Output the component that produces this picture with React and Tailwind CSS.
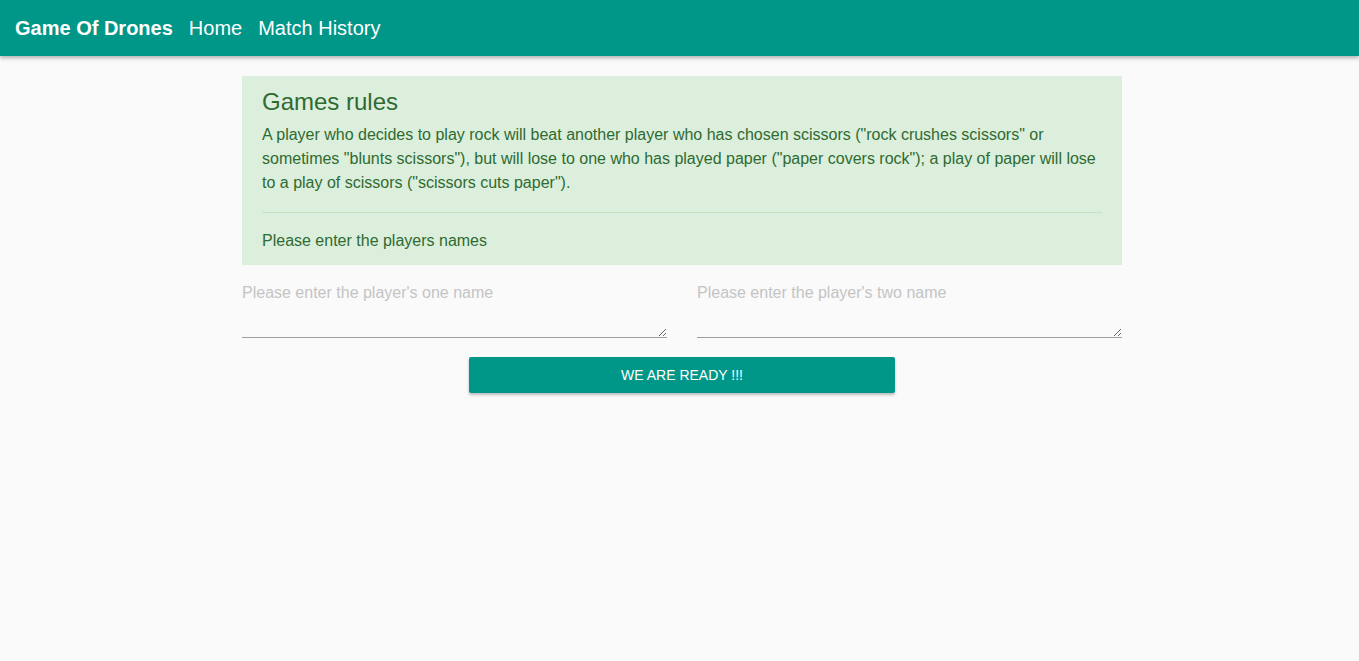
import React, { useState } from "react";

const App = () => {
  const [players, setPlayers] = useState({ one: "", two: "" });

  const handleChange = (e) => {
    const { name, value } = e.target;
    setPlayers({ ...players, [name]: value });
  };

  return (
    <div className="min-h-screen bg-[#fafafa] font-['Liberation_Sans',Arial,sans-serif]">
      {/* Navbar */}
      <nav className="h-[56px] bg-[#009688] flex items-center pl-[15px] shadow-[0_2px_4px_rgba(0,0,0,0.3)]">
        <span className="text-white text-[20px] font-bold mr-[16px]">Game Of Drones</span>
        <a className="text-white text-[20px] mr-[16px]" href="#">Home</a>
        <a className="text-white text-[20px]" href="#">Match History</a>
      </nav>

      <div className="w-[880px] ml-[242px] pt-[20px]">
        {/* Rules */}
        <div className="bg-[#dcefdc] text-[#2f6a31] px-[20px] pt-[14px] pb-[12px]">
          <h2 className="text-[24px] leading-[24px]">Games rules</h2>
          <p className="mt-[9px] text-[16px] leading-[24px]">
            A player who decides to play rock will beat another player who has chosen scissors ("rock crushes scissors" or
            sometimes "blunts scissors"), but will lose to one who has played paper ("paper covers rock"); a play of paper will lose
            to a play of scissors ("scissors cuts paper").
          </p>
          <hr className="mt-[17px] border-0 border-t border-[#c6e2c3]" />
          <p className="mt-[16px] text-[16px] leading-[24px]">Please enter the players names</p>
        </div>

        {/* Inputs */}
        <div className="flex justify-between mt-[15px]">
          <textarea
            name="one"
            value={players.one}
            onChange={handleChange}
            placeholder="Please enter the player's one name"
            className="w-[425px] h-[58px] pt-[1px] bg-transparent border-0 border-b border-[#9e9e9e] outline-none text-[16px] leading-[24px] placeholder:text-[#c4c4c4]"
          />
          <textarea
            name="two"
            value={players.two}
            onChange={handleChange}
            placeholder="Please enter the player's two name"
            className="w-[425px] h-[58px] pt-[1px] bg-transparent border-0 border-b border-[#9e9e9e] outline-none text-[16px] leading-[24px] placeholder:text-[#c4c4c4]"
          />
        </div>

        <div className="flex justify-center mt-[19px]">
          <button className="w-[426px] h-[36px] bg-[#009688] text-white text-[14px] uppercase rounded-[2px] shadow-[0_2px_3px_rgba(0,0,0,0.25)]">
            We are ready !!!
          </button>
        </div>
      </div>
    </div>
  );
};

export default App;
